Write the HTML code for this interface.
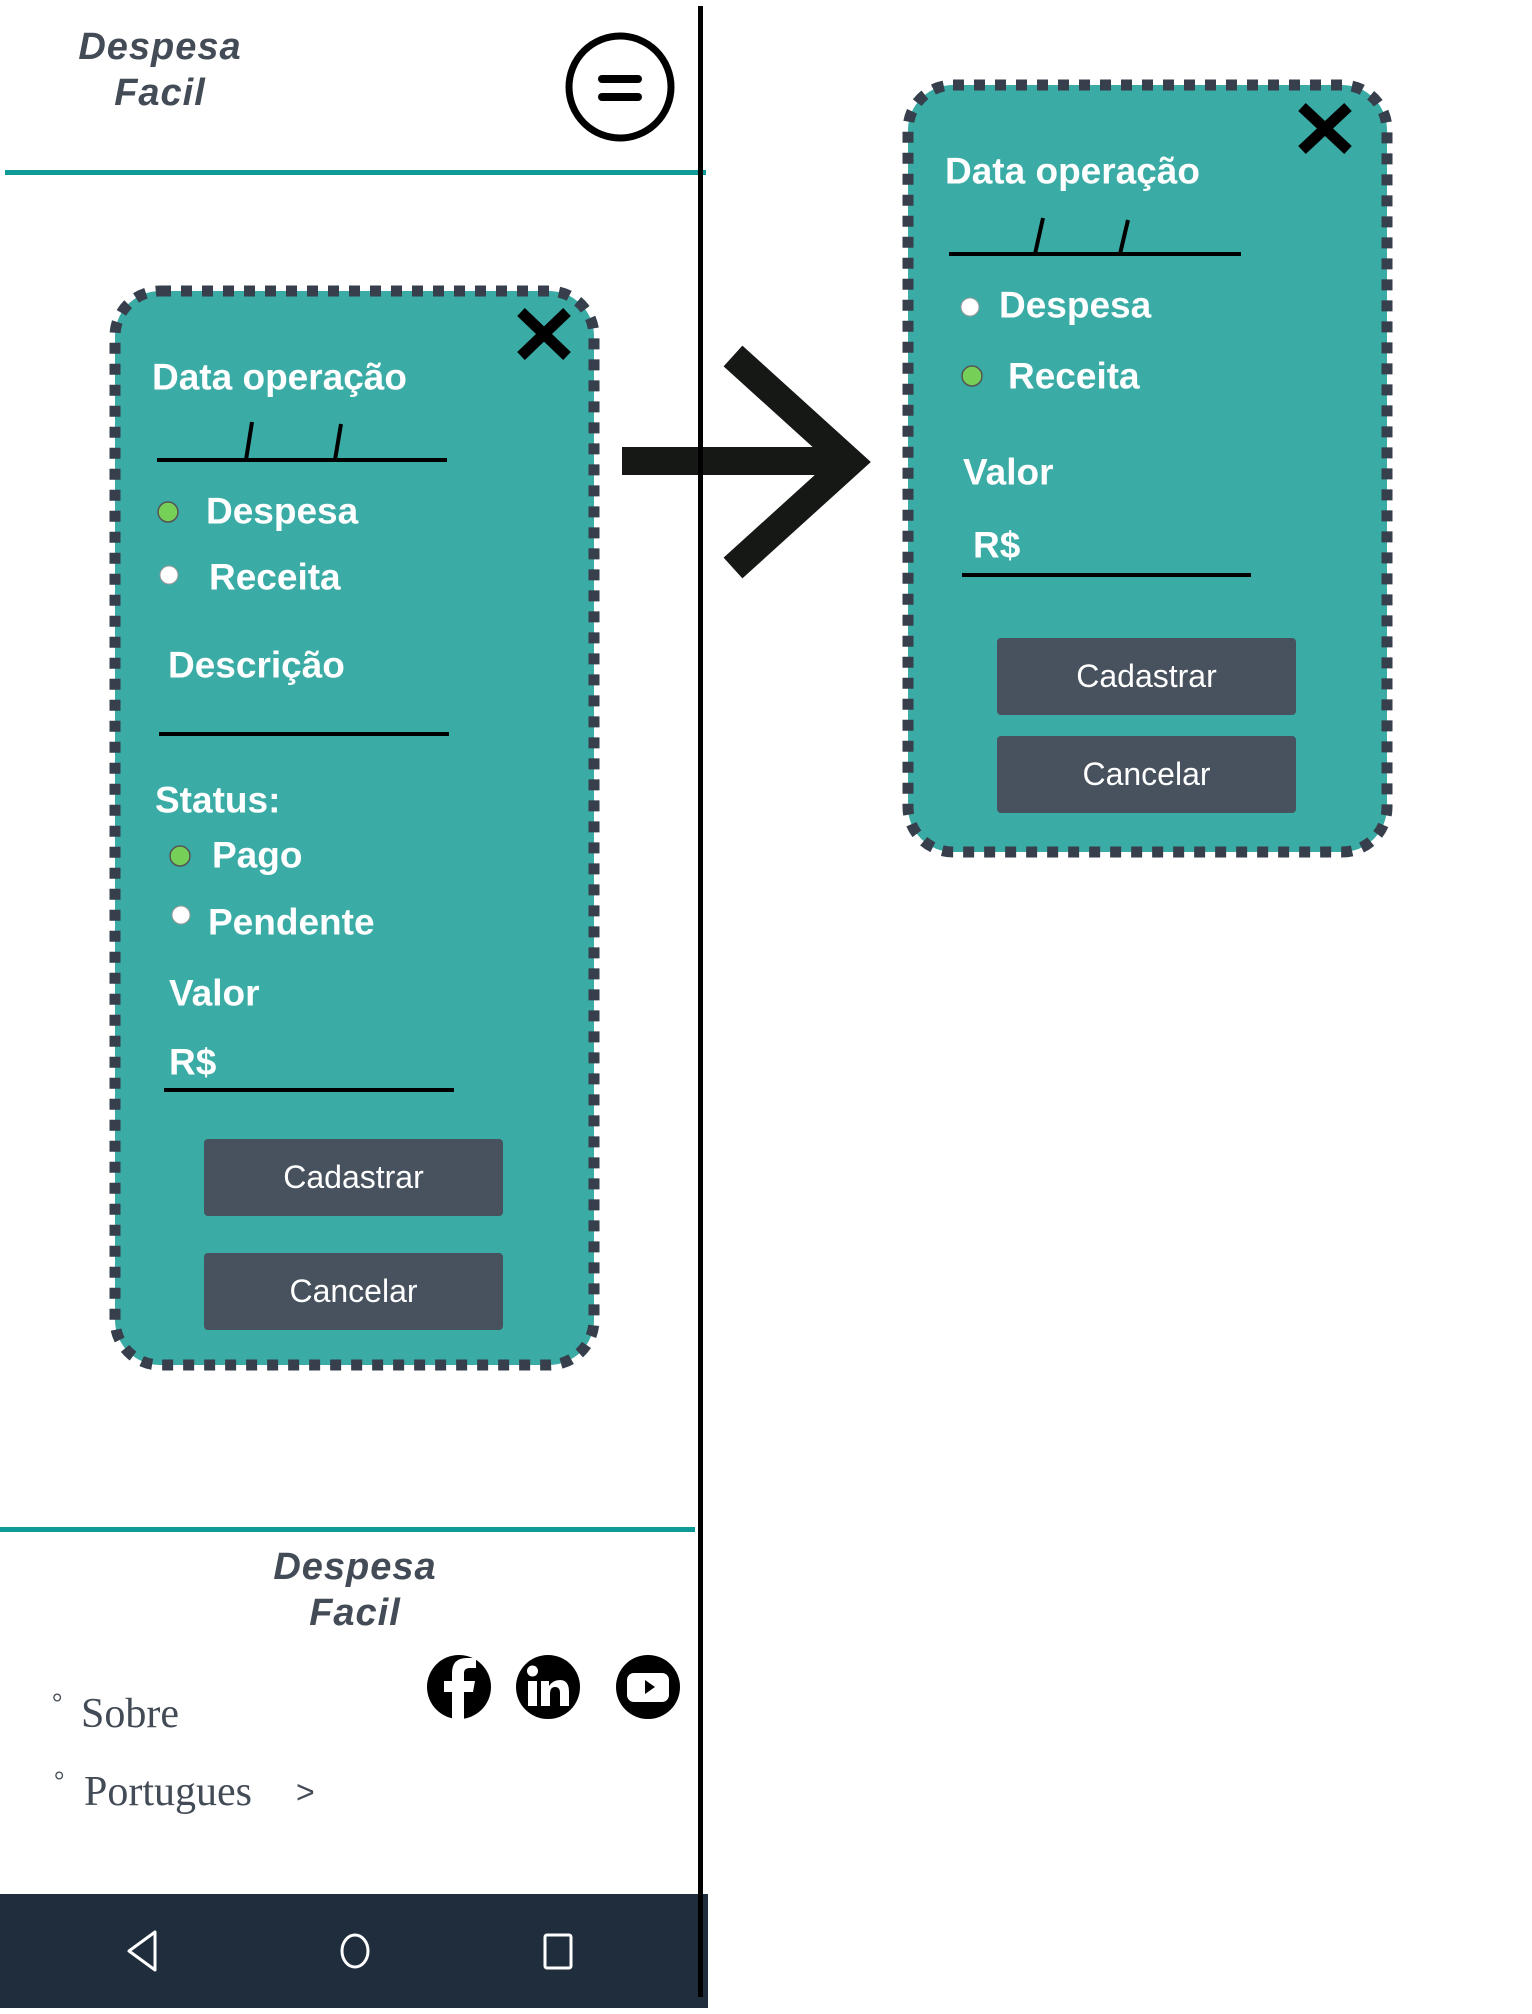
<!DOCTYPE html>
<html><head><meta charset="utf-8"><style>
html,body{margin:0;padding:0;background:#fff;}
body{width:1532px;height:2014px;position:relative;overflow:hidden;font-family:"Liberation Sans",sans-serif;}
.t{position:absolute;white-space:nowrap;line-height:1;}
.lbl{color:#fff;font-weight:bold;font-size:37px;transform:translateY(-50%);}
.logo{color:#434b56;font-weight:bold;font-style:italic;font-size:38px;line-height:46px;position:absolute;text-align:center;letter-spacing:1px;}
.btn{position:absolute;background:#47525e;border-radius:4px;color:#fff;font-size:32px;display:flex;align-items:center;justify-content:center;}
.ft{color:#434b56;font-family:"Liberation Serif",serif;font-size:42px;}
</style></head><body>

<svg width="1532" height="2014" style="position:absolute;left:0;top:0">
  <circle cx="620" cy="87" r="51" fill="none" stroke="#000" stroke-width="7"/>
  <line x1="602" y1="79" x2="638" y2="79" stroke="#000" stroke-width="8" stroke-linecap="round"/>
  <line x1="602" y1="97" x2="638" y2="97" stroke="#000" stroke-width="8" stroke-linecap="round"/>
  <rect x="5" y="170" width="701" height="5" fill="#0e9a96"/>

  <rect x="115" y="291" width="479" height="1074" rx="45" fill="#3aaba5" stroke="#363f4b" stroke-width="11" stroke-dasharray="11 10"/>
  <g stroke="#000" stroke-width="11">
    <line x1="521" y1="312" x2="567" y2="356"/><line x1="567" y1="312" x2="521" y2="356"/>
  </g>
  <g stroke="#000" stroke-width="4">
    <line x1="157" y1="460" x2="447" y2="460"/>
    <line x1="252" y1="422" x2="246" y2="460"/>
    <line x1="341" y1="424" x2="335" y2="460"/>
    <line x1="159" y1="734" x2="449" y2="734"/>
    <line x1="164" y1="1090" x2="454" y2="1090"/>
  </g>
  <circle cx="168" cy="512" r="10" fill="#76d058" stroke="#555" stroke-width="1.5"/>
  <circle cx="169" cy="575" r="9" fill="#fff" stroke="#999" stroke-width="1"/>
  <circle cx="180" cy="856" r="10" fill="#76d058" stroke="#555" stroke-width="1.5"/>
  <circle cx="181" cy="915" r="9" fill="#fff" stroke="#999" stroke-width="1"/>

  <rect x="622" y="447" width="210" height="28" fill="#161816"/>
  <polyline points="733,356 850,462 733,568" fill="none" stroke="#161816" stroke-width="28"/>

  <rect x="698" y="6" width="5" height="1991" fill="#000"/>

  <rect x="908" y="85" width="479" height="767" rx="45" fill="#3aaba5" stroke="#363f4b" stroke-width="11" stroke-dasharray="11 10"/>
  <g stroke="#000" stroke-width="11">
    <line x1="1302" y1="107" x2="1348" y2="150"/><line x1="1348" y1="107" x2="1302" y2="150"/>
  </g>
  <g stroke="#000" stroke-width="4">
    <line x1="949" y1="254" x2="1241" y2="254"/>
    <line x1="1043" y1="218" x2="1035" y2="254"/>
    <line x1="1128" y1="220" x2="1120" y2="254"/>
    <line x1="962" y1="575" x2="1251" y2="575"/>
  </g>
  <circle cx="970" cy="307" r="9" fill="#fff" stroke="#999" stroke-width="1"/>
  <circle cx="972" cy="376" r="10" fill="#76d058" stroke="#555" stroke-width="1.5"/>

  <rect x="0" y="1527" width="695" height="5" fill="#0e9a96"/>
  <circle cx="459" cy="1687" r="32" fill="#000"/>
  <path d="M464 1719 V1692 H473 L475 1681 H464 V1673 Q464 1668 470 1668 H476 V1658 H467 Q452 1658 452 1673 V1681 H444 V1692 H452 V1719 Z" fill="#fff"/>
  <circle cx="548" cy="1687" r="32" fill="#000"/>
  <rect x="528" y="1681" width="9" height="25" fill="#fff"/>
  <circle cx="532.5" cy="1671" r="5.5" fill="#fff"/>
  <path d="M541 1706 V1681 H549 V1686 Q553 1680 560 1680 Q569 1680 569 1692 V1706 H560 V1693 Q560 1687 555 1687 Q550 1687 550 1694 V1706 Z" fill="#fff"/>
  <circle cx="648" cy="1687" r="32" fill="#000"/>
  <rect x="627" y="1673" width="42" height="29" rx="7" fill="#fff"/>
  <path d="M645 1680 L655 1687 L645 1694 Z" fill="#000"/>

  <rect x="0" y="1894" width="708" height="114" fill="#1f2d3d"/>
  <path d="M155 1932 V1970 L129 1951 Z" fill="none" stroke="#fff" stroke-width="3" stroke-linejoin="round"/>
  <ellipse cx="355" cy="1951" rx="13" ry="16" fill="none" stroke="#fff" stroke-width="3"/>
  <rect x="545" y="1935" width="26" height="33" rx="2" fill="none" stroke="#fff" stroke-width="3"/>
  <rect x="698" y="1860" width="5" height="137" fill="#000"/>
</svg>

<div class="logo" style="left:60px;top:24px;width:200px;">Despesa<br>Facil</div>

<div class="t lbl" style="left:152px;top:377px;">Data operação</div>
<div class="t lbl" style="left:206px;top:511px;">Despesa</div>
<div class="t lbl" style="left:209px;top:577px;">Receita</div>
<div class="t lbl" style="left:168px;top:665px;">Descrição</div>
<div class="t lbl" style="left:155px;top:800px;">Status:</div>
<div class="t lbl" style="left:212px;top:855px;">Pago</div>
<div class="t lbl" style="left:208px;top:922px;">Pendente</div>
<div class="t lbl" style="left:169px;top:993px;">Valor</div>
<div class="t lbl" style="left:169px;top:1062px;">R$</div>
<div class="btn" style="left:204px;top:1139px;width:299px;height:77px;">Cadastrar</div>
<div class="btn" style="left:204px;top:1253px;width:299px;height:77px;">Cancelar</div>

<div class="t lbl" style="left:945px;top:171px;">Data operação</div>
<div class="t lbl" style="left:999px;top:305px;">Despesa</div>
<div class="t lbl" style="left:1008px;top:376px;">Receita</div>
<div class="t lbl" style="left:963px;top:472px;">Valor</div>
<div class="t lbl" style="left:973px;top:545px;">R$</div>
<div class="btn" style="left:997px;top:638px;width:299px;height:77px;">Cadastrar</div>
<div class="btn" style="left:997px;top:736px;width:299px;height:77px;">Cancelar</div>

<div class="logo" style="left:255px;top:1544px;width:200px;">Despesa<br>Facil</div>
<div class="t ft" style="left:52px;top:1690px;font-size:26px;">°</div>
<div class="t ft" style="left:81px;top:1693px;">Sobre</div>
<div class="t ft" style="left:54px;top:1768px;font-size:26px;">°</div>
<div class="t ft" style="left:84px;top:1771px;">Portugues</div>
<div class="t ft" style="left:296px;top:1776px;font-family:'Liberation Sans',sans-serif;font-size:32px;">&gt;</div>
</body></html>
